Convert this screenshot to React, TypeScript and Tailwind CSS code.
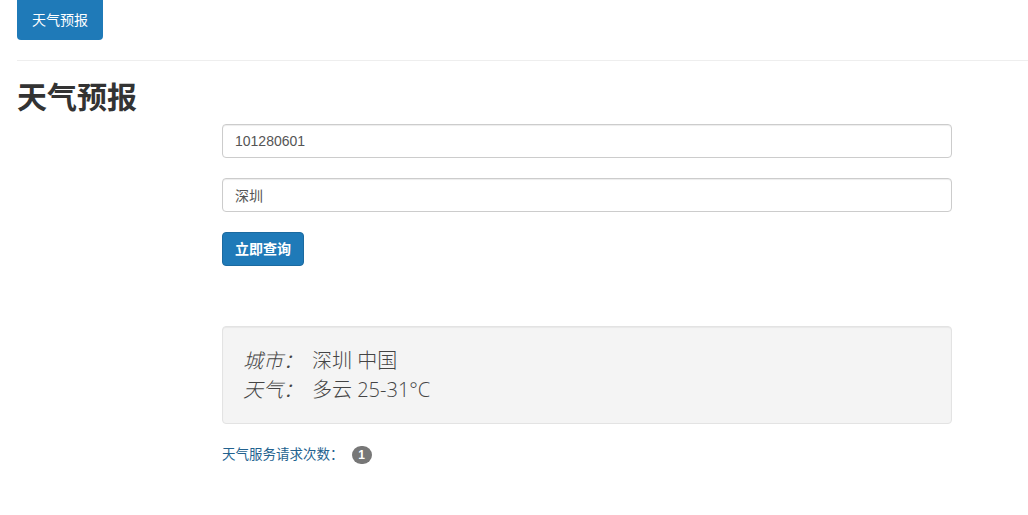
import React from 'react';

const font = '"Liberation Sans", "Noto Sans CJK SC", sans-serif';
const lightFont = '"Open Sans", "Noto Sans CJK SC", sans-serif';

const App: React.FC = () => {
  return (
    <div className="min-h-screen bg-white text-[#333] text-[14px]" style={{ fontFamily: font }}>
      <div className="px-[17px]">
        <div className="h-[40px] flex items-start">
          <button className="h-[40px] w-[86px] rounded-b-[4px] bg-[#1f7ab8] text-white text-[14px]">天气预报</button>
        </div>
        <hr className="mt-[20px] mr-[-17px] border-0 border-t border-[#eeeeee]" />
        <h1 className="mt-[20px] text-[30px] leading-[33px] font-bold text-[#333]">天气预报</h1>

        <div className="ml-[205px] w-[730px] mt-[10px]">
          <input
            className="block w-full h-[34px] px-[12px] border border-[#cccccc] rounded-[4px] text-[14px] text-[#555] shadow-[inset_0_1px_1px_rgba(0,0,0,0.075)] outline-none"
            defaultValue="101280601"
          />
          <input
            className="block w-full h-[34px] mt-[20px] px-[12px] border border-[#cccccc] rounded-[4px] text-[14px] text-[#555] shadow-[inset_0_1px_1px_rgba(0,0,0,0.075)] outline-none"
            defaultValue="深圳"
          />
          <button className="mt-[20px] h-[34px] w-[82px] rounded-[4px] bg-[#1f7ab8] border border-[#1b6aa0] text-white text-[14px] font-bold">立即查询</button>

          <div
            className="mt-[60px] rounded-[4px] border border-[#e3e3e3] bg-[#f4f4f4] px-[20px] pt-[19px] pb-[19px] text-[20px] leading-[29px] text-[#444] font-light shadow-[inset_0_1px_1px_rgba(0,0,0,0.05)]"
            style={{ fontFamily: lightFont }}
          >
            <div className="flex">
              <em className="w-[69px]">城市：</em>
              <span>深圳 中国</span>
            </div>
            <div className="flex">
              <em className="w-[69px]">天气：</em>
              <span>多云 25-31°C</span>
            </div>
          </div>

          <div className="mt-[21px] flex items-center text-[13.5px] text-[#23628f]">
            <span>天气服务请求次数：</span>
            <span className="ml-[8px] inline-flex items-center justify-center h-[18px] min-w-[20px] px-[6px] rounded-full bg-[#777] text-white text-[12px] font-bold">1</span>
          </div>
        </div>
      </div>
    </div>
  );
};

export default App;
